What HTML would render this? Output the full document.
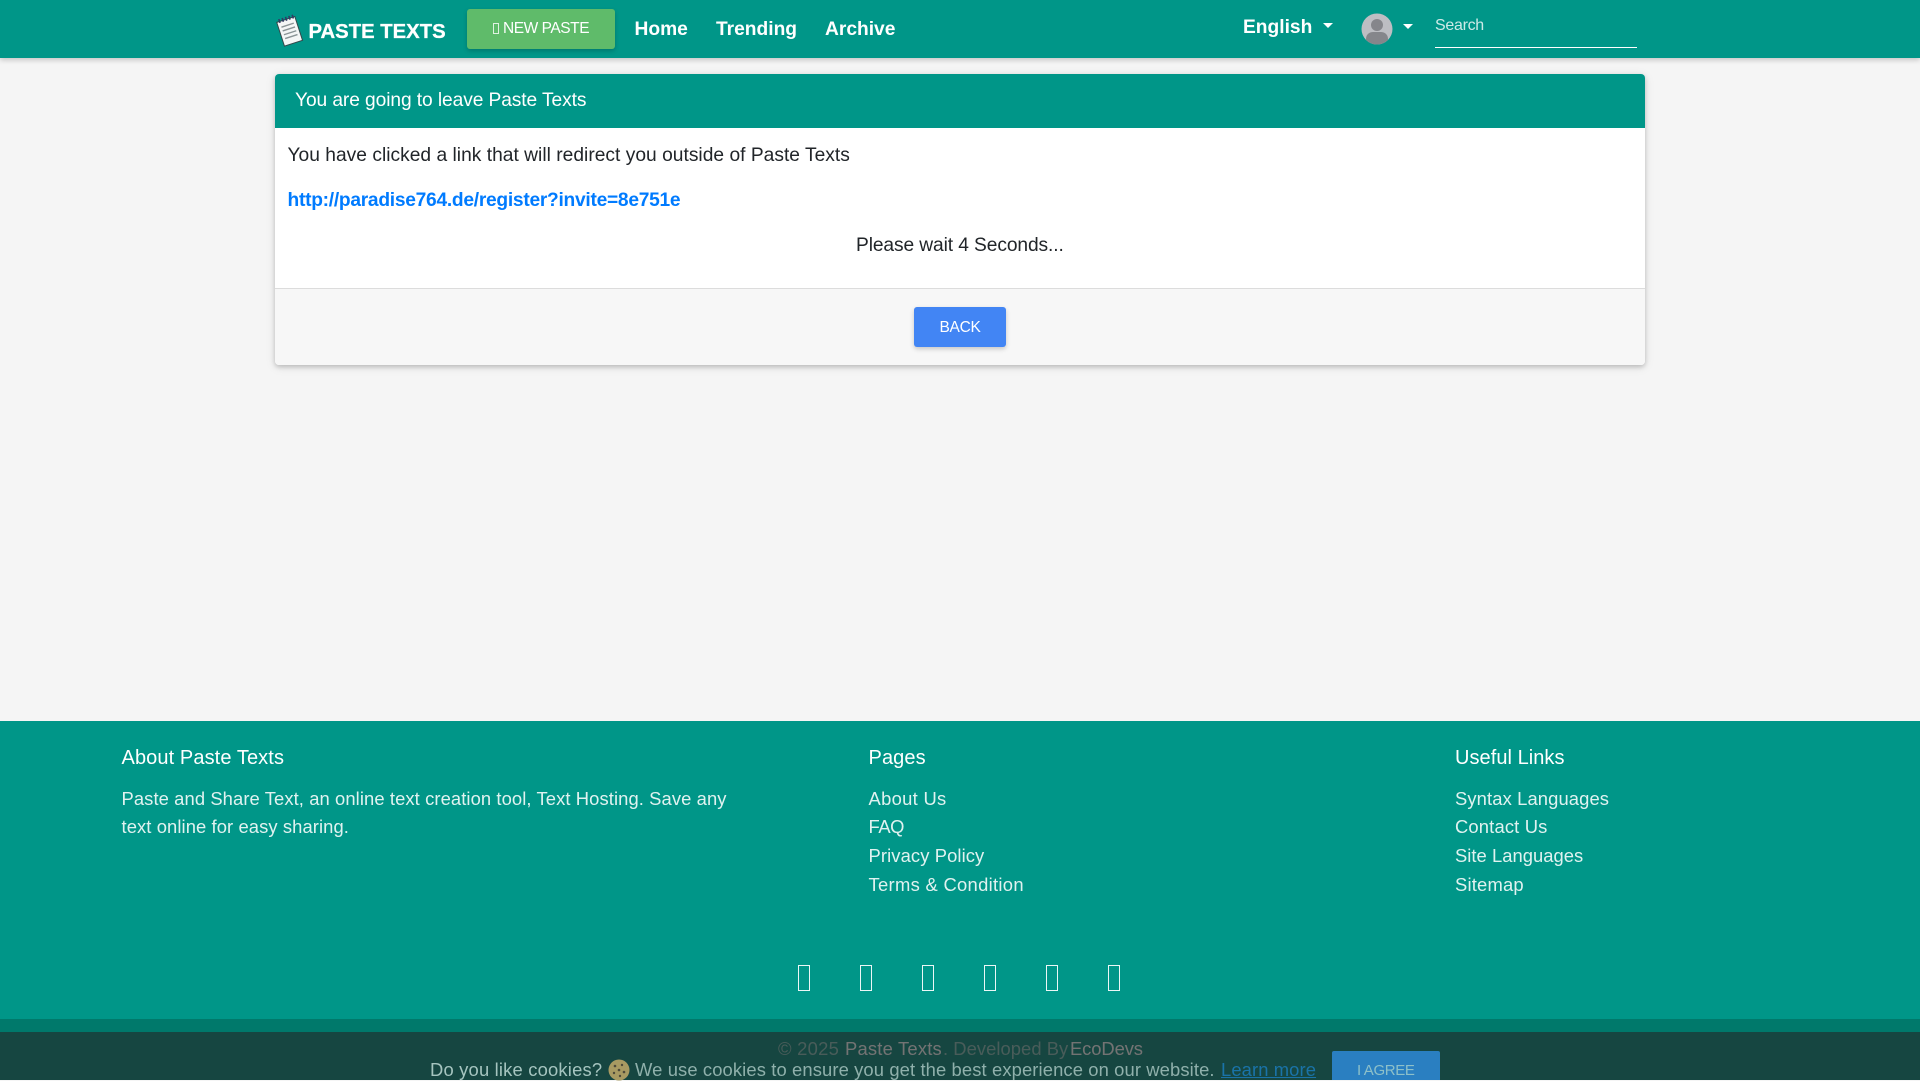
<!DOCTYPE html>
<html lang="en"><head><meta charset="utf-8"><title>Paste Texts</title>
<style>
*{box-sizing:border-box}
html,body{margin:0;padding:0;width:1920px;height:1080px;overflow:hidden;background:#f5f5f5;font-family:"Liberation Sans",Arial,sans-serif}
.t{position:absolute;white-space:nowrap;line-height:1}
.nav{position:absolute;left:0;top:0;width:1920px;height:58px;background:#009688;box-shadow:0 2px 5px rgba(0,0,0,.2)}
.n{font-weight:700;font-size:19.2px;color:#fff}
.btn{position:absolute;border-radius:3px;box-shadow:0 2px 5px rgba(0,0,0,.2)}
.caret{position:absolute;width:0;height:0;border-left:5px solid transparent;border-right:5px solid transparent;border-top:5px solid #fff}
.card{position:absolute;left:275px;top:74px;width:1370px;height:291px;background:#fff;border-radius:4px;box-shadow:0 2px 5px rgba(0,0,0,.18),0 2px 10px rgba(0,0,0,.1);overflow:hidden}
.f{position:absolute;left:0;top:721px;width:1920px;height:298px;background:#009688}
.fb{position:absolute;left:0;top:1019px;width:1920px;height:61px;background:#00796b}
.h{font-size:20px;color:#fff;letter-spacing:.1px}
.l{font-size:18.4px;color:#e0f2f0;letter-spacing:.15px}
.tofu{position:absolute;top:965px;width:12px;height:26px;border:1.5px solid #fff;opacity:.92}
.cookie{position:absolute;left:0;top:1032px;width:1920px;height:48px;background:rgba(37,37,37,.6)}
</style></head><body>
<div class="nav">
<svg style="position:absolute;left:274px;top:14px" width="30" height="34" viewBox="0 0 30 34">
<g transform="rotate(-18 15 17)"><rect x="6" y="5" width="19" height="25" fill="#f4f6f6" stroke="#33474a" stroke-width="1"/>
<path d="M9 11h13M9 15h13M9 19h13M9 23h13" stroke="#8a9496" stroke-width="1.4"/>
<path d="M9 2.5v4M12.5 2.5v4M16 2.5v4M19.5 2.5v4M23 2.5v4" stroke="#2f3b66" stroke-width="1.6"/></g></svg>
<span class="t" style="left:308.5px;top:22px;font-size:20.3px;font-weight:700;color:#fff;letter-spacing:0;-webkit-text-stroke:.3px #fff">PASTE TEXTS</span>
<div class="btn" style="left:467px;top:9px;width:148px;height:40px;background:#5fbb6a"></div>
<div style="position:absolute;left:493px;top:23px;width:6px;height:11px;border:1px solid rgba(255,255,255,.8)"></div>
<span class="t" style="left:503px;top:21px;font-size:15.5px;color:#fff;letter-spacing:-.45px">NEW PASTE</span>
<span class="t n" style="left:634.5px;top:20px">Home</span>
<span class="t n" style="left:716px;top:20px">Trending</span>
<span class="t n" style="left:825px;top:20px">Archive</span>
<span class="t n" style="left:1243px;top:18px">English</span>
<div class="caret" style="left:1323px;top:23px"></div>
<svg style="position:absolute;left:1361px;top:13px" width="32" height="32" viewBox="0 0 32 32"><defs><clipPath id="a"><circle cx="16" cy="16" r="15.5"/></clipPath></defs><circle cx="16" cy="16" r="15.5" fill="#bdbec3"/><g clip-path="url(#a)" fill="#85868b"><circle cx="16" cy="12" r="6"/><path d="M5 32v-6c0-5 4-7 7-7h8c3 0 7 2 7 7v6z"/></g></svg>
<div class="caret" style="left:1403px;top:24px"></div>
<span class="t" style="left:1435px;top:18px;font-size:16px;color:#cdeae7;letter-spacing:-.3px">Search</span>
<div style="position:absolute;left:1435px;top:47px;width:202px;height:1px;background:#fff"></div>
</div>

<div class="card">
<div style="position:absolute;left:0;top:0;width:1370px;height:54px;background:#009688"></div>
<span class="t" style="left:20px;top:17px;font-size:19.2px;color:#fff;letter-spacing:-.09px">You are going to leave Paste Texts</span>
<span class="t" style="left:12.5px;top:72px;font-size:19.2px;color:#212529;letter-spacing:.02px">You have clicked a link that will redirect you outside of Paste Texts</span>
<span class="t" style="left:12.5px;top:117px;font-size:19.2px;font-weight:700;color:#007bff;letter-spacing:-.27px">http://paradise764.de/register?invite=8e751e</span>
<span class="t" style="left:581px;top:162px;font-size:19.2px;color:#212529;letter-spacing:-.1px">Please wait 4 Seconds...</span>
<div style="position:absolute;left:0;top:214px;width:1370px;height:77px;background:#f7f7f7;border-top:1px solid #dcdcdc"></div>
<div class="btn" style="left:639px;top:233px;width:92px;height:40px;background:#4285f4"></div>
<span class="t" style="left:664.5px;top:246px;font-size:15.5px;color:#fff;letter-spacing:-.3px">BACK</span>
</div>

<div class="f"></div><div class="fb"></div>
<span class="t h" style="left:121.5px;top:748px">About Paste Texts</span>
<span class="t l" style="left:121.5px;top:790px;letter-spacing:.09px">Paste and Share Text, an online text creation tool, Text Hosting. Save any</span>
<span class="t l" style="left:121.5px;top:818px;letter-spacing:.09px">text online for easy sharing.</span>
<span class="t h" style="left:868.5px;top:748px">Pages</span>
<span class="t l" style="left:868.5px;top:790px;letter-spacing:.3px">About Us</span>
<span class="t l" style="left:868.5px;top:818px;letter-spacing:-.4px">FAQ</span>
<span class="t l" style="left:868.5px;top:847px;letter-spacing:.1px">Privacy Policy</span>
<span class="t l" style="left:868.5px;top:876px;letter-spacing:.3px">Terms &amp; Condition</span>
<span class="t h" style="left:1455px;top:748px;letter-spacing:.05px">Useful Links</span>
<span class="t l" style="left:1455px;top:790px;letter-spacing:.11px">Syntax Languages</span>
<span class="t l" style="left:1455px;top:818px">Contact Us</span>
<span class="t l" style="left:1455px;top:847px;letter-spacing:.03px">Site Languages</span>
<span class="t l" style="left:1455px;top:876px;letter-spacing:.2px">Sitemap</span>
<div class="tofu" style="left:798px"></div><div class="tofu" style="left:860px"></div><div class="tofu" style="left:922px"></div><div class="tofu" style="left:984px"></div><div class="tofu" style="left:1046px"></div><div class="tofu" style="left:1108px"></div>
<span class="t" style="left:778px;top:1040px;font-size:18.4px;color:#7fb0a9;letter-spacing:.25px">© 2025</span>
<span class="t" style="left:845px;top:1040px;font-size:18.4px;color:#e8e8e8;letter-spacing:.2px">Paste Texts</span>
<span class="t" style="left:943px;top:1040px;font-size:18.4px;color:#7fb0a9;letter-spacing:.04px">. Developed By</span>
<span class="t" style="left:1070px;top:1040px;font-size:18.4px;color:#e8e8e8;letter-spacing:-.1px">EcoDevs</span>

<div class="cookie"></div>
<span class="t" style="left:430px;top:1061px;font-size:18.4px;color:#a5c4bf;letter-spacing:.18px">Do you like cookies?</span>
<svg style="position:absolute;left:608px;top:1059px" width="22" height="22" viewBox="0 0 22 22"><circle cx="11" cy="11" r="10.5" fill="#a89a62"/><g fill="#4e4a3a"><circle cx="7" cy="7" r="1.3"/><circle cx="14" cy="6" r="1.2"/><circle cx="11" cy="11" r="1.3"/><circle cx="6" cy="14" r="1.2"/><circle cx="16" cy="13" r="1.3"/><circle cx="12" cy="17" r="1.2"/></g></svg>
<span class="t" style="left:635px;top:1061px;font-size:18.4px;color:#8fb0ab;letter-spacing:.11px">We use cookies to ensure you get the best experience on our website.</span>
<span class="t" style="left:1221px;top:1061px;font-size:18.4px;color:#1a73a8;letter-spacing:.1px;text-decoration:underline">Learn more</span>
<div style="position:absolute;left:1332px;top:1051px;width:108px;height:29px;background:#2a7fc1;border-radius:2px 2px 0 0"></div>
<span class="t" style="left:1357px;top:1063px;font-size:15px;color:#8dc0c9;letter-spacing:-.35px">I AGREE</span>
</body></html>
